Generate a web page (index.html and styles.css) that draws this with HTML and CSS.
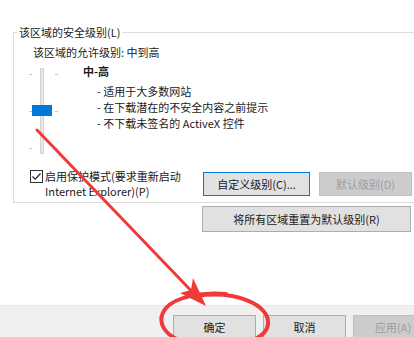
FILE: index.html
```html
<!DOCTYPE html>
<html lang="zh-CN">
<head>
    <meta charset="UTF-8">
    <meta name="viewport" content="width=device-width, initial-scale=1.0">
    <title>安全设置</title>
    <link rel="stylesheet" href="styles.css">
</head>
<body>
    <div class="page">
        <fieldset class="zone">
            <legend>该区域的安全级别(L)</legend>
            <div class="allowed">该区域的允许级别: 中到高</div>

            <div class="level">
                <div class="slider">
                    <div class="track"></div>
                    <span class="tick tick-l t1"></span>
                    <span class="tick tick-r t1"></span>
                    <span class="tick tick-l t2"></span>
                    <span class="tick tick-r t2"></span>
                    <span class="tick tick-l t3"></span>
                    <span class="tick tick-r t3"></span>
                    <div class="thumb"></div>
                </div>
                <div class="desc">
                    <div class="desc-title">中-高</div>
                    <ul class="desc-list">
                        <li>- 适用于大多数网站</li>
                        <li>- 在下载潜在的不安全内容之前提示</li>
                        <li>- 不下载未签名的 ActiveX 控件</li>
                    </ul>
                </div>
            </div>

            <div class="options">
                <label class="protect">
                    <span class="checkbox">
                        <svg width="11" height="11" viewBox="0 0 11 11">
                            <path d="M1.5 5.5 L4.2 8.2 L9.5 2.5" fill="none" stroke="#222" stroke-width="1.2"/>
                        </svg>
                    </span>
                    <span class="protect-text">启用保护模式(要求重新启动<br>Internet Explorer)(P)</span>
                </label>
                <div class="level-buttons">
                    <button class="btn btn-focus btn-custom">自定义级别(C)...</button>
                    <button class="btn btn-disabled btn-default">默认级别(D)</button>
                </div>
            </div>
        </fieldset>

        <button class="btn btn-reset">将所有区域重置为默认级别(R)</button>
    </div>

    <div class="footer">
        <button class="btn btn-footer">确定</button>
        <button class="btn btn-footer">取消</button>
        <button class="btn btn-footer btn-apply btn-disabled">应用(A)</button>
    </div>

    <!-- red hand-drawn annotation on top of the dialog -->
    <svg class="marks" width="414" height="337" viewBox="0 0 414 337">
        <line x1="37" y1="130" x2="201" y2="301" stroke="#f03a3a" stroke-width="3" stroke-linecap="round"/>
        <polygon points="206,306 180,293 191,290 193,278" fill="#f03a3a"/>
        <path d="M196 296 C 236 290, 270 305, 268 324 C 266 344, 222 350, 192 344 C 164 338, 155 322, 166 308 C 176 297, 200 292, 226 294"
              fill="none" stroke="#f03a3a" stroke-width="4" stroke-linecap="round"/>
    </svg>
</body>
</html>
```

FILE: styles.css
```css
* {
    margin: 0;
    padding: 0;
    box-sizing: border-box;
}

html, body {
    width: 414px;
    height: 337px;
    overflow: hidden;
}

body {
    position: relative;
    background: #fff;
    color: #1a1a1a;
    font-family: "Noto Sans CJK SC", "Noto Sans", sans-serif;
    font-size: 11px;
}

.page {
    height: 305px;
    background: #fff;
    padding-top: 24px;
}

/* group box runs on past the right edge, so no right border */
.zone {
    margin-left: 13px;
    width: 401px;
    border: 1px solid #dcdcdc;
    border-right: none;
    padding: 0 0 3px 0;
    min-width: 0;
}

.zone legend {
    margin-left: 3px;
    padding: 0 2px;
    line-height: 16px;
}

.allowed {
    margin: 4px 0 0 19px;
    line-height: 16px;
}

.level {
    display: flex;
    margin-top: 3px;
}

.slider {
    position: relative;
    width: 30px;
    height: 86px;
    margin: 5px 0 0 14px;
}

.track {
    position: absolute;
    left: 12px;
    top: 0;
    bottom: 0;
    width: 4px;
    background: #e7e7e7;
    border: 1px solid #d4d4d4;
}

.tick {
    position: absolute;
    width: 3px;
    height: 1px;
    background: #c4c4c4;
}

.tick-l { left: 1px; }
.tick-r { left: 27px; }
.t1 { top: 6px; }
.t2 { top: 43px; }
.t3 { top: 80px; }

.thumb {
    position: absolute;
    left: 4px;
    top: 37px;
    width: 20px;
    height: 11px;
    background: #0078d7;
}

.desc {
    margin-left: 25px;
}

.desc-title {
    font-weight: bold;
    line-height: 16px;
}

.desc-list {
    list-style: none;
    margin-top: 4px;
    padding-left: 14px;
    line-height: 16px;
}

.options {
    display: flex;
    align-items: flex-start;
    margin-top: 15px;
}

.protect {
    display: flex;
    align-items: flex-start;
    margin-left: 16px;
}

.checkbox {
    display: flex;
    align-items: center;
    justify-content: center;
    width: 13px;
    height: 13px;
    margin-top: 1px;
    border: 1px solid #333;
    background: #fff;
}

.protect-text {
    margin-left: 2px;
    line-height: 15px;
    white-space: nowrap;
}

.level-buttons {
    display: flex;
    gap: 9px;
    margin: 3px 2px 0 auto;
}

.btn {
    font-family: inherit;
    font-size: 11px;
    color: #1a1a1a;
    background: #e1e1e1;
    border: 1px solid #adadad;
}

.btn-focus {
    border-color: #0078d7;
}

.btn-disabled {
    background: #cccccc;
    border-color: #bfbfbf;
    color: #9c9c9c;
}

.btn-custom {
    width: 107px;
    height: 24px;
}

.btn-default {
    width: 93px;
    height: 24px;
}

.btn-reset {
    display: block;
    width: 209px;
    height: 26px;
    margin: 3px 0 0 202px;
}

.footer {
    height: 32px;
    background: #f0f0f0;
    border-top: 1px solid #e6e6e6;
    display: flex;
    gap: 7px;
    padding: 9px 0 0 173px;
    overflow: hidden;
}

.btn-footer {
    flex-shrink: 0;
    width: 83px;
    height: 23px;
}

/* the apply button is cut by the window edge */
.btn-apply {
    width: 61px;
    border-right: none;
    text-align: left;
    padding-left: 21px;
    white-space: nowrap;
}

.marks {
    position: absolute;
    top: 0;
    left: 0;
    pointer-events: none;
}
```
